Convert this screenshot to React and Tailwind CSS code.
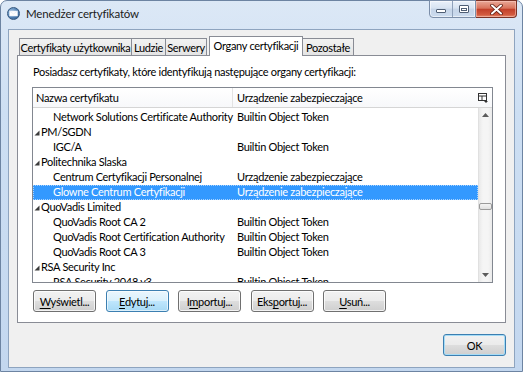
import React from "react";

const rows = [
  { t: "c", a: "Network Solutions Certificate Authority", b: "Builtin Object Token" },
  { t: "g", a: "PM/SGDN" },
  { t: "c", a: "IGC/A", b: "Builtin Object Token" },
  { t: "g", a: "Politechnika Slaska" },
  { t: "c", a: "Centrum Certyfikacji Personalnej", b: "Urządzenie zabezpieczające" },
  { t: "c", a: "Glowne Centrum Certyfikacji", b: "Urządzenie zabezpieczające", sel: true },
  { t: "g", a: "QuoVadis Limited" },
  { t: "c", a: "QuoVadis Root CA 2", b: "Builtin Object Token" },
  { t: "c", a: "QuoVadis Root Certification Authority", b: "Builtin Object Token" },
  { t: "c", a: "QuoVadis Root CA 3", b: "Builtin Object Token" },
  { t: "g", a: "RSA Security Inc" },
  { t: "c", a: "RSA Security 2048 v3", b: "Builtin Object Token" },
];

function Arrow() {
  return (
    <svg width="6" height="6" viewBox="0 0 6 6" className="shrink-0">
      <polygon points="5.5,0.5 5.5,5.5 0.5,5.5" fill="#3c3c3c" />
    </svg>
  );
}

function Btn({ children, hot, def, w = "w-[63px]" }) {
  let cls =
    "border-[#707070] bg-[linear-gradient(to_bottom,#f2f2f2_0%,#ebebeb_48%,#dddddd_52%,#cfcfcf_100%)] shadow-[inset_0_0_0_1px_rgba(255,255,255,0.75)]";
  if (hot)
    cls =
      "border-[#3c7fb1] bg-[linear-gradient(to_bottom,#eaf6fd_0%,#d9f0fc_48%,#bee6fd_52%,#a7d9f5_100%)] shadow-[inset_0_0_0_1px_rgba(255,255,255,0.6)]";
  if (def)
    cls =
      "border-[#3c7fb1] bg-[linear-gradient(to_bottom,#f2f2f2_0%,#ebebeb_48%,#dddddd_52%,#cfcfcf_100%)] shadow-[inset_0_0_0_1px_#a6dcf6]";
  return (
    <div className={`${w} h-[22px] shrink-0 rounded-[3px] border ${cls} flex items-center justify-center leading-[15px] whitespace-nowrap`}>
      {children}
    </div>
  );
}

function U({ children }) {
  return <span className="underline underline-offset-2 decoration-[1px]">{children}</span>;
}

const tabCls =
  "h-[17px] border border-b-0 border-[#898c95] bg-[linear-gradient(to_bottom,#f2f2f2,#e4e4e4)] flex items-center justify-center leading-[15px] whitespace-nowrap";

export default function App() {
  return (
    <div className="w-[523px] h-[372px] overflow-hidden bg-white font-['Lato',sans-serif] text-[11px] tracking-[-0.3px] text-black">
      <div className="w-full h-full rounded-t-[7px] border border-[#6d84a2] bg-[linear-gradient(to_bottom,#dce8f6_0%,#cddff3_30%,#c3d7ef_100%)] flex flex-col px-[7px] pb-[3px]">
        {/* title bar */}
        <div className="h-[28px] flex items-start shrink-0">
          <div className="mt-[6px] ml-[-1px] w-[13px] h-[13px] rounded-full bg-[radial-gradient(circle_at_35%_35%,#9fc0e0_0%,#4f7fb3_55%,#2b5482_100%)] border border-[#36597f] flex items-center justify-center">
            <svg width="9" height="7" viewBox="0 0 9 7">
              <path d="M0.5 1 L4.5 4 L8.5 1 M0.5 1 L0.5 6 L8.5 6 L8.5 1 Z" fill="#ffffff" stroke="#dde8f3" strokeWidth="0.6" />
            </svg>
          </div>
          <div className="ml-[6px] mt-[5px] leading-[16px] text-[11.5px] tracking-[-0.2px] text-[#1b1b1b] whitespace-nowrap">Menedżer certyfikatów</div>
          <div className="flex-1" />
          <div className="flex mr-[-2px] mt-[-1px]">
            <div className="w-[47px] h-[18px] rounded-bl-[4px] border border-[#7b8ea9] bg-[linear-gradient(to_bottom,#eaf1fa_0%,#d7e3f1_45%,#c6d5e8_50%,#cbdbee_100%)] flex shadow-[inset_0_0_0_1px_rgba(255,255,255,0.55)]">
              <div className="w-[23px] h-full flex items-center justify-center border-r border-[#8fa1ba]">
                <div className="w-[10px] h-[4px] mt-[3px] border border-[#4f5f75] bg-white rounded-[1px]" />
              </div>
              <div className="flex-1 h-full flex items-center justify-center">
                <div className="w-[10px] h-[8px] border border-[#4f5f75] bg-white rounded-[1px] flex items-center justify-center">
                  <div className="w-[6px] h-[3px] border border-[#4f5f75]" />
                </div>
              </div>
            </div>
            <div className="w-[41px] h-[18px] rounded-br-[4px] border border-l-0 border-[#7a3226] bg-[linear-gradient(to_bottom,#e9a898_0%,#d9735c_45%,#c2402a_52%,#d25a3f_85%,#e48a6c_100%)] flex items-center justify-center shadow-[inset_0_0_0_1px_rgba(255,210,200,0.5)]">
              <svg width="13" height="11" viewBox="0 0 13 11">
                <path d="M2 1.5 L11 9.5 M11 1.5 L2 9.5" stroke="#5a1a10" strokeWidth="3.6" strokeLinecap="round" />
                <path d="M2 1.5 L11 9.5 M11 1.5 L2 9.5" stroke="#ffffff" strokeWidth="2" strokeLinecap="round" />
              </svg>
            </div>
          </div>
        </div>

        {/* client area */}
        <div className="flex-1 bg-[#f0f0f0] border border-[#8ea4bf] flex flex-col pt-[6px] pl-[8px] pr-[8px]">
          {/* tabs */}
          <div className="h-[19px] flex items-end ml-[2px] shrink-0">
            <div className={`w-[113px] ${tabCls}`}>Certyfikaty użytkownika</div>
            <div className={`w-[34px] border-l-0 ${tabCls}`}>Ludzie</div>
            <div className={`w-[41px] border-l-0 ${tabCls}`}>Serwery</div>
            <div className="ml-[2px] w-[94px] h-[20px] mb-[-1px] relative z-10 border border-b-0 border-[#898c95] bg-white flex items-start justify-center pt-[1px] leading-[15px] whitespace-nowrap">Organy certyfikacji</div>
            <div className={`w-[51px] border-l-0 ${tabCls}`}>Pozostałe</div>
          </div>

          {/* panel */}
          <div className="w-[489px] h-[268px] border border-[#898c95] bg-white flex flex-col shrink-0">
            <div className="pl-[15px] pt-[8px] leading-[15px] whitespace-nowrap">Posiadasz certyfikaty, które identyfikują następujące organy certyfikacji:</div>

            {/* tree table */}
            <div className="ml-[14px] mt-[8px] w-[461px] h-[196px] border border-[#828790] flex flex-col shrink-0">
              <div className="h-[20px] shrink-0 flex border-b border-[#d5d5d5] bg-[linear-gradient(to_bottom,#ffffff,#f7f8fa)]">
                <div className="w-[200px] pl-[3px] flex items-center leading-[15px] border-r border-[#e3e3e3] whitespace-nowrap">Nazwa certyfikatu</div>
                <div className="flex-1 pl-[4px] flex items-center leading-[15px] whitespace-nowrap">Urządzenie zabezpieczające</div>
                <div className="w-[18px] flex items-center justify-center">
                  <svg width="10" height="10" viewBox="0 0 10 10">
                    <rect x="0.5" y="0.5" width="8" height="7" fill="#fff" stroke="#333" />
                    <line x1="0.5" y1="3" x2="8.5" y2="3" stroke="#333" />
                    <line x1="4" y1="3" x2="4" y2="7.5" stroke="#333" />
                    <polygon points="6,8 10,8 8,10" fill="#333" />
                  </svg>
                </div>
              </div>
              <div className="flex-1 flex min-h-0">
                <div className="w-[445px] pt-[2px] overflow-hidden">
                  {rows.map((r, i) => (
                    <div
                      key={i}
                      className={`h-[15px] flex items-center leading-[15px] whitespace-nowrap ${r.sel ? "bg-[#3399ff] text-white outline outline-1 outline-dotted outline-offset-[-1px] outline-[#a8d3ff]" : ""}`}
                    >
                      {r.t === "g" ? (
                        <div className="w-[204px] flex items-center pl-[1px] gap-[1px]">
                          <Arrow />
                          <span className="mt-[-2px]">{r.a}</span>
                        </div>
                      ) : (
                        <>
                          <div className="w-[204px] pl-[20px] mt-[-2px]">{r.a}</div>
                          <div className="mt-[-2px]">{r.b}</div>
                        </>
                      )}
                    </div>
                  ))}
                </div>
                {/* scrollbar */}
                <div className="w-[14px] bg-[linear-gradient(to_right,#e9e9e9,#f5f5f5_30%,#f5f5f5_70%,#eaeaea)] border-l border-[#e0e0e0] flex flex-col items-center">
                  <div className="h-[14px] w-full flex items-center justify-center">
                    <svg width="7" height="4" viewBox="0 0 7 4"><polygon points="0,4 7,4 3.5,0" fill="#5c5c5c" /></svg>
                  </div>
                  <div className="h-[81px]" />
                  <div className="w-[13px] h-[7px] rounded-[2px] border border-[#9a9a9a] bg-[linear-gradient(to_bottom,#f4f4f4,#e0e0e0)]" />
                  <div className="flex-1" />
                  <div className="h-[14px] w-full flex items-center justify-center">
                    <svg width="7" height="4" viewBox="0 0 7 4"><polygon points="0,0 7,0 3.5,4" fill="#5c5c5c" /></svg>
                  </div>
                </div>
              </div>
            </div>

            {/* buttons */}
            <div className="flex gap-[9.5px] ml-[15px] mt-[7px]">
              <Btn><span><U>W</U>yświetl...</span></Btn>
              <Btn hot><span><U>E</U>dytuj...</span></Btn>
              <Btn><span>I<U>m</U>portuj...</span></Btn>
              <Btn><span>Eks<U>p</U>ortuj...</span></Btn>
              <Btn><span><U>U</U>suń...</span></Btn>
            </div>
          </div>

          <div className="flex justify-end mt-[11px] w-[489px]">
            <div className="h-[20px]">
              <Btn def w="w-[63px]">OK</Btn>
            </div>
          </div>
        </div>
      </div>
    </div>
  );
}
